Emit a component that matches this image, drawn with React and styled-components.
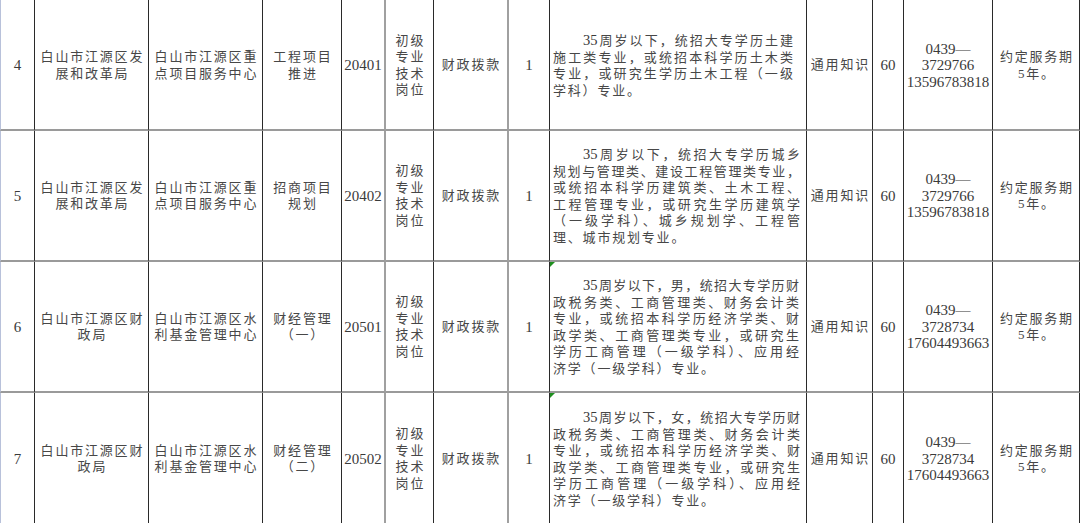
import React from "react";
import styled, { createGlobalStyle, css } from "styled-components";

const GlobalStyle = createGlobalStyle`
  html, body {
    margin: 0;
    padding: 0;
    background: #ffffff;
  }
  body {
    width: 1080px;
    height: 523px;
    overflow: hidden;
    font-family: "Liberation Serif", "Noto Sans CJK SC", serif;
    color: #474747;
  }
  * { box-sizing: border-box; }
`;

const WIDTHS = [35, 114, 114, 79, 44, 48, 75, 41, 257, 66, 31, 89, 87];
const GRAY_EDGES = [4, 6];

const Sheet = styled.div`
  width: 1080px;
  height: 523px;
  overflow: hidden;
  display: flex;
  flex-direction: column;
`;

const Row = styled.div`
  display: grid;
  grid-template-columns: ${WIDTHS.map((w) => `${w}px`).join(" ")};
  height: ${(p) => p.$height}px;
  flex: none;
`;

const Cell = styled.div`
  position: relative;
  display: flex;
  flex-direction: column;
  align-items: center;
  justify-content: center;
  text-align: center;
  padding-top: ${(p) => p.$padTop}px;
  border-bottom: 2px solid #9a9a9a;
  border-right: ${(p) => (p.$gray ? "2px solid #a0a0a0" : "1px solid #2a2a2a")};
  ${(p) =>
    p.$first &&
    css`
      border-left: 1px solid #b8c1da;
    `}
`;

const Cjk = styled.div`
  font-size: 13px;
  line-height: 16.5px;
  letter-spacing: 1.8px;
  margin-right: -1.8px;
  white-space: nowrap;
`;

const Num = styled.div`
  font-size: 15px;
  line-height: 16.5px;
  color: #3a3a3a;
  white-space: nowrap;
`;

const ReqCell = styled(Cell)`
  align-items: stretch;
  text-align: left;
  padding-left: 3px;
  padding-right: ${(p) => p.$padRight}px;
  ${(p) =>
    p.$flag &&
    css`
      &::before {
        content: "";
        position: absolute;
        left: 0;
        top: 0;
        width: 0;
        height: 0;
        border-top: 5px solid #1f8f1f;
        border-right: 5px solid transparent;
      }
    `}
`;

const ReqLine = styled.div`
  font-size: 13px;
  line-height: 16.5px;
  padding-left: ${(p) => (p.$indent ? 30 : 0)}px;
  ${(p) =>
    p.$last
      ? css`
          text-align: left;
          letter-spacing: 1.8px;
        `
      : css`
          text-align: justify;
          text-align-last: justify;
          letter-spacing: 0;
        `}
`;

const Lead = styled.span`
  font-size: 14.5px;
  color: #3a3a3a;
`;

const rows = [
  {
    no: "4",
    height: 131,
    padTop: 2,
    dept: ["白山市江源区发", "展和改革局"],
    unit: ["白山市江源区重", "点项目服务中心"],
    post: ["工程项目", "推进"],
    code: "20401",
    padRight: 13,
    flag: false,
    req: [
      "周岁以下，统招大专学历土建",
      "施工类专业，或统招本科学历土木类",
      "专业，或研究生学历土木工程（一级",
      "学科）专业。",
    ],
    phone: ["0439—", "3729766", "13596783818"],
  },
  {
    no: "5",
    height: 131,
    padTop: 1,
    dept: ["白山市江源区发", "展和改革局"],
    unit: ["白山市江源区重", "点项目服务中心"],
    post: ["招商项目", "规划"],
    code: "20402",
    padRight: 6,
    flag: false,
    req: [
      "周岁以下，统招大专学历城乡",
      "规划与管理类、建设工程管理类专业，",
      "或统招本科学历建筑类、土木工程、",
      "工程管理专业，或研究生学历建筑学",
      "（一级学科）、城乡规划学、工程管",
      "理、城市规划专业。",
    ],
    phone: ["0439—", "3729766", "13596783818"],
  },
  {
    no: "6",
    height: 131,
    padTop: 1,
    dept: ["白山市江源区财", "政局"],
    unit: ["白山市江源区水", "利基金管理中心"],
    post: ["财经管理", "（一）"],
    code: "20501",
    padRight: 7,
    flag: true,
    req: [
      "周岁以下，男，统招大专学历财",
      "政税务类、工商管理类、财务会计类",
      "专业，或统招本科学历经济学类、财",
      "政学类、工商管理类专业，或研究生",
      "学历工商管理（一级学科）、应用经",
      "济学（一级学科）专业。",
    ],
    phone: ["0439—", "3728734", "17604493663"],
  },
  {
    no: "7",
    height: 133,
    padTop: 1,
    dept: ["白山市江源区财", "政局"],
    unit: ["白山市江源区水", "利基金管理中心"],
    post: ["财经管理", "（二）"],
    code: "20502",
    padRight: 6,
    flag: true,
    req: [
      "周岁以下，女，统招大专学历财",
      "政税务类、工商管理类、财务会计类",
      "专业，或统招本科学历经济学类、财",
      "政学类、工商管理类专业，或研究生",
      "学历工商管理（一级学科）、应用经",
      "济学（一级学科）专业。",
    ],
    phone: ["0439—", "3728734", "17604493663"],
  },
];

function CjkLines({ lines }) {
  return lines.map((l, i) => <Cjk key={i}>{l}</Cjk>);
}

function DataRow({ r }) {
  const g = (i) => GRAY_EDGES.includes(i);
  return (
    <Row $height={r.height}>
      <Cell $first $padTop={r.padTop}>
        <Num>{r.no}</Num>
      </Cell>
      <Cell $padTop={r.padTop}>
        <CjkLines lines={r.dept} />
      </Cell>
      <Cell $padTop={r.padTop}>
        <CjkLines lines={r.unit} />
      </Cell>
      <Cell $padTop={r.padTop}>
        <CjkLines lines={r.post} />
      </Cell>
      <Cell $gray={g(4)} $padTop={r.padTop}>
        <Num>{r.code}</Num>
      </Cell>
      <Cell $padTop={r.padTop}>
        <CjkLines lines={["初级", "专业", "技术", "岗位"]} />
      </Cell>
      <Cell $gray={g(6)} $padTop={r.padTop}>
        <Cjk>财政拨款</Cjk>
      </Cell>
      <Cell $padTop={r.padTop}>
        <Num>1</Num>
      </Cell>
      <ReqCell $padTop={r.padTop} $padRight={r.padRight} $flag={r.flag}>
        {r.req.map((l, i) => (
          <ReqLine key={i} $indent={i === 0} $last={i === r.req.length - 1}>
            {i === 0 && <Lead>35</Lead>}
            {l}
          </ReqLine>
        ))}
      </ReqCell>
      <Cell $padTop={r.padTop}>
        <Cjk>通用知识</Cjk>
      </Cell>
      <Cell $padTop={r.padTop}>
        <Num>60</Num>
      </Cell>
      <Cell $padTop={r.padTop}>
        {r.phone.map((p, i) => (
          <Num key={i}>{p}</Num>
        ))}
      </Cell>
      <Cell $padTop={r.padTop}>
        <CjkLines lines={["约定服务期", "5年。"]} />
      </Cell>
    </Row>
  );
}

export default function App() {
  return (
    <>
      <GlobalStyle />
      <Sheet>
        {rows.map((r) => (
          <DataRow key={r.no} r={r} />
        ))}
      </Sheet>
    </>
  );
}
